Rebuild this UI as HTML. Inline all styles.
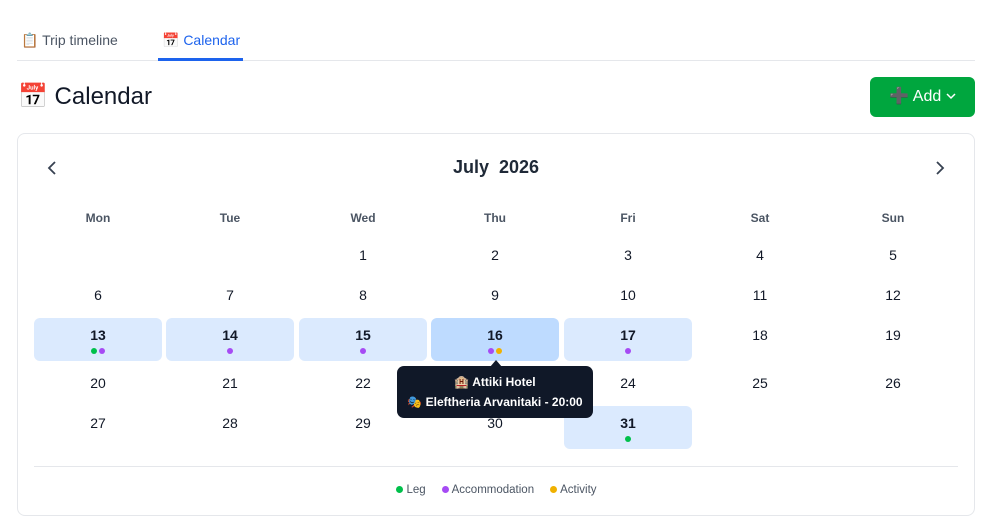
<!DOCTYPE html>
<html><head><meta charset="utf-8"><style>
*{margin:0;padding:0;box-sizing:border-box}
body{width:993px;height:531px;background:#fff;font-family:"Liberation Sans","DejaVu Sans","Noto Sans CJK JP",sans-serif;color:#111827;position:relative;overflow:hidden}
.a{position:absolute}
.tab{font-size:14px;top:32px}
.c{position:absolute;width:128px;text-align:center;font-size:14px}
.hd{font-size:12px;color:#4b5563;font-weight:bold}
.cell{position:absolute;width:128px;height:43px;background:#dbeafe;border-radius:6px;text-align:center;font-size:14px;font-weight:bold;padding-top:9px}
.dots{display:flex;justify-content:center;gap:2px;margin-top:5px}
.d{width:6px;height:6px;border-radius:50%}
.g{background:#00c04b}.p{background:#a64bf4}.o{background:#f0b100}
.lg{display:inline-block;width:7px;height:7px;border-radius:50%;margin-right:3px;vertical-align:0}
</style></head><body>
<div class="a tab" style="left:21px;color:#4b5563">📋 Trip timeline</div>
<div class="a tab" style="left:162px;color:#1d63ed">📅 Calendar</div>
<div class="a" style="left:17px;right:18px;top:60px;height:1px;background:#e5e7eb"></div>
<div class="a" style="left:158px;top:58px;width:85px;height:3px;background:#1d63ed"></div>
<div class="a" style="left:18px;top:82px;font-size:24px;color:#111827">📅 Calendar</div>
<div class="a" style="left:870px;top:77px;width:105px;height:40px;background:#00a63e;border-radius:6px;color:#fff;font-size:16px;line-height:40px;text-align:center">➕ Add <svg width="10" height="8" style="vertical-align:1px"><path d="M1 2l4 4 4-4" stroke="#fff" stroke-width="1.5" fill="none"/></svg></div>
<div class="a" style="left:17px;top:133px;width:958px;height:383px;border:1px solid #e5e7eb;border-radius:8px"></div>
<svg class="a" style="left:46px;top:160px" width="12" height="16"><path d="M9 2L3 8l6 6" stroke="#374151" stroke-width="1.8" fill="none"/></svg>
<svg class="a" style="left:934px;top:160px" width="12" height="16"><path d="M3 2l6 6-6 6" stroke="#374151" stroke-width="1.8" fill="none"/></svg>
<div class="a" style="left:396px;width:200px;text-align:center;top:157px;font-size:18px;font-weight:bold;color:#1f2937">July&nbsp; 2026</div>
<div class="c hd" style="left:34px;top:211px">Mon</div>
<div class="c hd" style="left:166px;top:211px">Tue</div>
<div class="c hd" style="left:299px;top:211px">Wed</div>
<div class="c hd" style="left:431px;top:211px">Thu</div>
<div class="c hd" style="left:564px;top:211px">Fri</div>
<div class="c hd" style="left:696px;top:211px">Sat</div>
<div class="c hd" style="left:829px;top:211px">Sun</div>
<div class="c" style="left:299px;top:247px">1</div><div class="c" style="left:431px;top:247px">2</div><div class="c" style="left:564px;top:247px">3</div><div class="c" style="left:696px;top:247px">4</div><div class="c" style="left:829px;top:247px">5</div>
<div class="c" style="left:34px;top:287px">6</div><div class="c" style="left:166px;top:287px">7</div><div class="c" style="left:299px;top:287px">8</div><div class="c" style="left:431px;top:287px">9</div><div class="c" style="left:564px;top:287px">10</div><div class="c" style="left:696px;top:287px">11</div><div class="c" style="left:829px;top:287px">12</div>
<div class="cell" style="left:34px;top:318px">13<div class="dots"><i class="d g"></i><i class="d p"></i></div></div>
<div class="cell" style="left:166px;top:318px">14<div class="dots"><i class="d p"></i></div></div>
<div class="cell" style="left:299px;top:318px">15<div class="dots"><i class="d p"></i></div></div>
<div class="cell" style="left:431px;top:318px;background:#bedbff">16<div class="dots"><i class="d p"></i><i class="d o"></i></div></div>
<div class="cell" style="left:564px;top:318px">17<div class="dots"><i class="d p"></i></div></div>
<div class="c" style="left:696px;top:327px">18</div><div class="c" style="left:829px;top:327px">19</div>
<div class="c" style="left:34px;top:375px">20</div><div class="c" style="left:166px;top:375px">21</div><div class="c" style="left:299px;top:375px">22</div><div class="c" style="left:564px;top:375px">24</div><div class="c" style="left:696px;top:375px">25</div><div class="c" style="left:829px;top:375px">26</div>
<div class="c" style="left:34px;top:415px">27</div><div class="c" style="left:166px;top:415px">28</div><div class="c" style="left:299px;top:415px">29</div><div class="c" style="left:431px;top:415px">30</div>
<div class="cell" style="left:564px;top:406px">31<div class="dots"><i class="d g"></i></div></div>
<div class="a" style="left:490px;top:360px;width:0;height:0;border-left:6px solid transparent;border-right:6px solid transparent;border-bottom:7px solid #101828"></div>
<div class="a" style="left:397px;top:366px;width:196px;height:52px;background:#101828;border-radius:7px;color:#fff;font-size:12px;font-weight:bold;text-align:center;line-height:20px;padding-top:6px">🏨 Attiki Hotel<br>🎭 Eleftheria Arvanitaki - 20:00</div>
<div class="a" style="left:34px;top:466px;width:924px;height:1px;background:#e5e7eb"></div>
<div class="a" style="left:0;width:993px;top:484px;text-align:center;font-size:11.5px;color:#4b5563;word-spacing:1px">
<span class="lg" style="background:#00c04b"></span>Leg<span style="display:inline-block;width:16px"></span><span class="lg" style="background:#a64bf4"></span>Accommodation<span style="display:inline-block;width:16px"></span><span class="lg" style="background:#f0b100"></span>Activity</div>
</body></html>
